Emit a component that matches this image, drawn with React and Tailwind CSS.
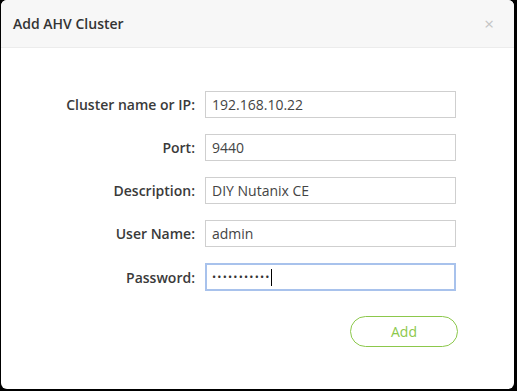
export default function App() {
  const rows = [
    { label: "Cluster name or IP:", value: "192.168.10.22" },
    { label: "Port:", value: "9440" },
    { label: "Description:", value: "DIY Nutanix CE" },
    { label: "User Name:", value: "admin" },
  ];
  return (
    <div className="w-[517px] h-[391px] bg-black pl-[1px] pr-[3px] pb-[2px] overflow-hidden" style={{ fontFamily: '"Open Sans", sans-serif' }}>
      <div className="w-full h-full bg-white rounded-[6px] overflow-hidden flex flex-col">
        <div className="h-[48px] bg-[#f7f7f7] border-b border-[#ececec] flex items-center justify-between pl-[12px] pr-[20px]">
          <span className="text-[14px] font-semibold text-[#333]">Add AHV Cluster</span>
          <span className="text-[#c4c4c4] text-[17px] leading-none">×</span>
        </div>
        <div className="flex flex-col gap-[16px] pt-[43px]">
          {rows.map((r) => (
            <div key={r.label} className="flex items-center">
              <div className="w-[194px] text-right text-[14px] font-semibold text-[#3a3a3a]">{r.label}</div>
              <div className="ml-[10px] w-[251px] h-[27px] border border-[#cfcfcf] flex items-center px-[6px] text-[14px] text-[#444]">
                {r.value}
              </div>
            </div>
          ))}
          <div className="flex items-center">
            <div className="w-[194px] text-right text-[14px] font-semibold text-[#3a3a3a]">Password:</div>
            <div className="ml-[10px] w-[251px] h-[28px] border-2 border-[#a8c2ec] flex items-center px-[5px] text-[11px] text-[#333]">
              <span className="tracking-[1.2px]">•••••••••••</span>
              <span className="w-[1px] h-[17px] bg-black"></span>
            </div>
          </div>
        </div>
        <div className="flex justify-end pr-[56px] pt-[25px]">
          <button className="w-[108px] h-[31px] rounded-full border border-[#8cc84b] text-[#8cc84b] text-[14px] bg-white">Add</button>
        </div>
      </div>
    </div>
  );
}
